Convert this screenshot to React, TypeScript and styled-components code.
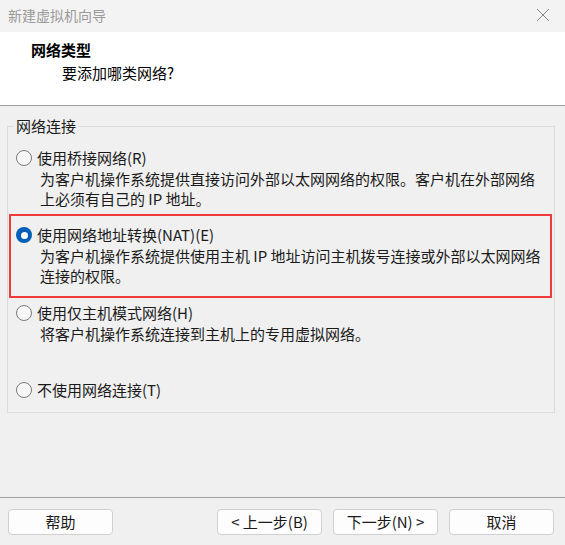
import React, { useState } from 'react';
import styled, { createGlobalStyle } from 'styled-components';

const GlobalStyle = createGlobalStyle`
  html, body {
    margin: 0;
    padding: 0;
    background: #f0f0f0;
  }

  body {
    font-family: 'Noto Sans CJK SC', 'Noto Sans', sans-serif;
    font-size: 15px;
    color: #1a1a1a;
  }
`;

const Window = styled.div`
  width: 565px;
  height: 545px;
  display: flex;
  flex-direction: column;
  background: #f0f0f0;
  overflow: hidden;
`;

const TitleBar = styled.div`
  height: 32px;
  flex: none;
  display: flex;
  align-items: center;
  justify-content: space-between;
  padding: 0 15px 3px 8px;
  box-sizing: border-box;
  background: #f3f3f3;
  color: #9a9a9a;
  font-size: 14px;
  line-height: 20px;
`;

const CloseButton = styled.button`
  width: 14px;
  height: 14px;
  padding: 0;
  border: 0;
  background: none;
  display: flex;
`;

const Header = styled.div`
  height: 74px;
  flex: none;
  box-sizing: border-box;
  background: #ffffff;
  border-bottom: 1px solid #a0a0a0;
  padding: 8px 0 0 31px;
`;

const HeaderTitle = styled.div`
  font-weight: 700;
  line-height: 20px;
  color: #000;
`;

const HeaderSub = styled.div`
  margin: 3px 0 0 31px;
  line-height: 20px;
  color: #000;
`;

const Group = styled.fieldset`
  margin: 10px 10px 0 7px;
  padding: 12px 8px 12px 8px;
  border: 1px solid #dcdcdc;
  display: flex;
  flex-direction: column;
  gap: 16px;
  min-width: 0;
`;

const Legend = styled.legend`
  padding: 0 2px;
  margin-left: -2px;
  line-height: 20px;
  color: #1a1a1a;
`;

const Option = styled.div<{ $highlight?: boolean; $compact?: boolean }>`
  min-height: ${({ $compact }) => ($compact ? 'auto' : '61px')};
  ${({ $highlight }) => $highlight && `
    border: 2px solid #f03a3a;
    margin: -11px -6px -11px -7px;
    padding: 9px 4px 10px 5px;
  `}
`;

const OptionLabel = styled.label`
  display: flex;
  align-items: center;
  gap: 5px;
  line-height: 20px;
  cursor: default;
`;

const Radio = styled.span<{ $checked: boolean }>`
  width: 16px;
  height: 16px;
  flex: none;
  box-sizing: border-box;
  border-radius: 50%;
  border: ${({ $checked }) => ($checked ? '0' : '1px solid #7a7a7a')};
  background: ${({ $checked }) => ($checked ? '#005fb8' : '#f7f7f7')};
  display: flex;
  align-items: center;
  justify-content: center;

  &::after {
    content: '';
    display: ${({ $checked }) => ($checked ? 'block' : 'none')};
    width: 7px;
    height: 7px;
    border-radius: 50%;
    background: #ffffff;
  }
`;

const Description = styled.div`
  margin: 1px 0 0 24px;
  line-height: 20px;
  color: #1a1a1a;
`;

const Footer = styled.div`
  margin-top: auto;
  height: 48px;
  flex: none;
  box-sizing: border-box;
  border-top: 1px solid #a0a0a0;
  padding: 11px 11px 0 8px;
  display: flex;
  align-items: flex-start;
  gap: 11px;
`;

const Spacer = styled.div`
  flex: 1;
`;

const Button = styled.button`
  width: 105px;
  height: 26px;
  box-sizing: border-box;
  border: 1px solid #d0d0d0;
  border-radius: 4px;
  background: #fdfdfd;
  font-family: inherit;
  font-size: 15px;
  line-height: 20px;
  color: #1a1a1a;
  padding: 0;
`;

const options = [
  {
    key: 'bridged',
    label: '使用桥接网络(R)',
    desc: ['为客户机操作系统提供直接访问外部以太网网络的权限。客户机在外部网络', '上必须有自己的 IP 地址。'],
  },
  {
    key: 'nat',
    label: '使用网络地址转换(NAT)(E)',
    desc: ['为客户机操作系统提供使用主机 IP 地址访问主机拨号连接或外部以太网网络', '连接的权限。'],
  },
  {
    key: 'hostonly',
    label: '使用仅主机模式网络(H)',
    desc: ['将客户机操作系统连接到主机上的专用虚拟网络。'],
  },
  {
    key: 'none',
    label: '不使用网络连接(T)',
    desc: [],
  },
];

export default function App () {
  const [selected, setSelected] = useState('nat');

  return (
    <Window>
      <GlobalStyle />
      <TitleBar>
        <span>新建虚拟机向导</span>
        <CloseButton aria-label='关闭'>
          <svg width='14' height='14' viewBox='0 0 14 14'>
            <path d='M1 1 L13 13 M13 1 L1 13' stroke='#8a8a8a' strokeWidth='1' fill='none' />
          </svg>
        </CloseButton>
      </TitleBar>

      <Header>
        <HeaderTitle>网络类型</HeaderTitle>
        <HeaderSub>要添加哪类网络?</HeaderSub>
      </Header>

      <Group>
        <Legend>网络连接</Legend>
        {options.map((opt, i) => (
          <Option
            key={opt.key}
            $compact={i === options.length - 1}
            $highlight={opt.key === 'nat'}
          >
            <OptionLabel onClick={() => setSelected(opt.key)}>
              <Radio $checked={selected === opt.key} />
              {opt.label}
            </OptionLabel>
            {opt.desc.length > 0 && (
              <Description>
                {opt.desc.map((line) => <div key={line}>{line}</div>)}
              </Description>
            )}
          </Option>
        ))}
      </Group>

      <Footer>
        <Button>帮助</Button>
        <Spacer />
        <Button>&lt; 上一步(B)</Button>
        <Button>下一步(N) &gt;</Button>
        <Button>取消</Button>
      </Footer>
    </Window>
  );
}
